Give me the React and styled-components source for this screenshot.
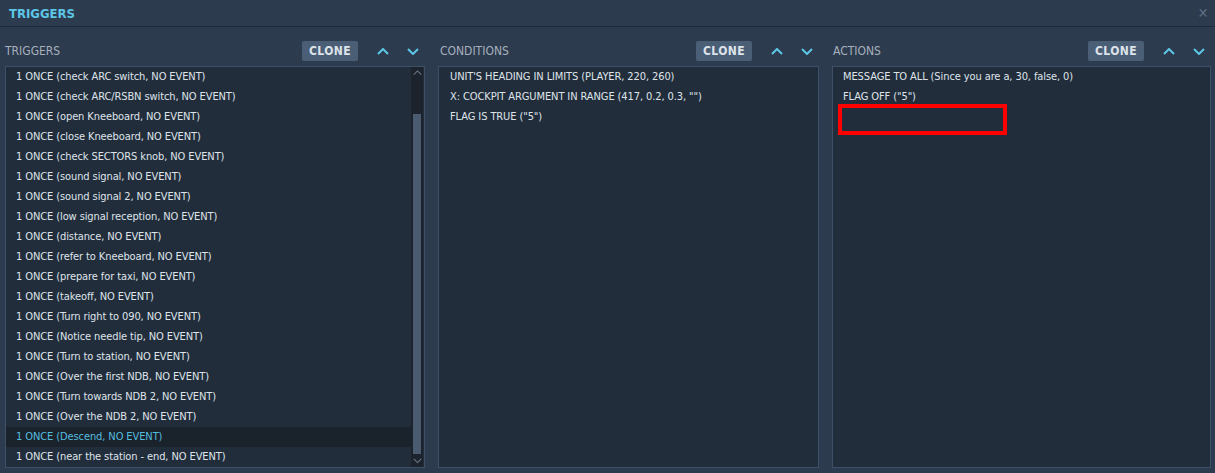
import React from 'react';
import styled, { createGlobalStyle } from 'styled-components';

const GlobalStyle = createGlobalStyle`
  html, body {
    margin: 0;
    padding: 0;
    background: #2d3b4e;
  }
  body {
    font-family: "DejaVu Sans Condensed", "DejaVu Sans", sans-serif;
  }
`;

const Window = styled.div`
  width: 1215px;
  height: 473px;
  background: #2d3b4e;
  display: flex;
  flex-direction: column;
  overflow: hidden;
`;

const TitleBar = styled.div`
  height: 26px;
  border-bottom: 1px solid #1f2937;
  display: flex;
  align-items: center;
  justify-content: space-between;
  padding: 0 6px 0 9px;
`;

const Title = styled.div`
  color: #5cc6e6;
  font-weight: bold;
  font-size: 13px;
`;

const Close = styled.div`
  color: #5d6e84;
  font-size: 14px;
  line-height: 1;
  width: 12px;
  display: flex;
  justify-content: center;
`;

const Columns = styled.div`
  flex: 1;
  display: grid;
  grid-template-columns: 420px 381px 379px;
  column-gap: 13px;
  padding: 14px 4px 5px 5px;
`;

const Column = styled.div`
  display: flex;
  flex-direction: column;
  min-height: 0;
`;

const Header = styled.div`
  height: 20px;
  display: flex;
  align-items: center;
  margin-bottom: 5px;
  padding-left: ${p => p.$indent || 0}px;
`;

const Label = styled.div`
  flex: 1;
  color: #a6b0bd;
  font-size: 12px;
`;

const CloneButton = styled.div`
  width: 56px;
  height: 20px;
  background: #4a5e76;
  border-radius: 2px;
  color: #dde3e9;
  font-weight: bold;
  font-size: 12px;
  letter-spacing: 0.4px;
  display: flex;
  align-items: center;
  justify-content: center;
  margin-right: 13px;
`;

const ArrowButton = styled.div`
  width: 24px;
  height: 20px;
  display: flex;
  align-items: center;
  justify-content: center;
  & + & {
    margin-left: 6px;
  }
`;

const List = styled.div`
  flex: 1;
  position: relative;
  background: #222d3b;
  border: 1px solid #3e5068;
  display: flex;
  min-height: 0;
`;

const Rows = styled.div`
  flex: 1;
  display: flex;
  flex-direction: column;
`;

const Row = styled.div`
  height: 20px;
  line-height: 20px;
  padding-left: ${p => p.$pad || 10}px;
  font-size: 11px;
  letter-spacing: -0.1px;
  white-space: nowrap;
  color: ${p => (p.$selected ? '#55bedf' : '#dfe4ea')};
  background: ${p => (p.$selected ? '#1a222c' : 'transparent')};
`;

const ScrollBar = styled.div`
  width: 12px;
  margin-right: 1px;
  background: #1c232d;
  display: flex;
  flex-direction: column;
  align-items: center;
`;

const ScrollArrow = styled.div`
  height: 12px;
  display: flex;
  align-items: center;
  justify-content: center;
`;

const ScrollTrack = styled.div`
  flex: 1;
  width: 100%;
  display: flex;
  justify-content: center;
  padding-top: ${p => p.$top}px;
  padding-bottom: ${p => p.$bottom}px;
`;

const Thumb = styled.div`
  width: 8px;
  background: #4a5b6f;
`;

const Highlight = styled.div`
  position: absolute;
  left: 5px;
  top: 37px;
  width: 161px;
  height: 23px;
  border: 4px solid #ff0000;
`;

const Chevron = ({ up, color = '#5cc6e6', size = 12, stroke = 2 }) => (
  <svg width={size} height={size / 2 + 1} viewBox="0 0 12 7">
    <path
      d={up ? 'M1 6 L6 1 L11 6' : 'M1 1 L6 6 L11 1'}
      fill="none"
      stroke={color}
      strokeWidth={stroke}
    />
  </svg>
);

const triggers = [
  '1 ONCE (check ARC switch, NO EVENT)',
  '1 ONCE (check ARC/RSBN switch, NO EVENT)',
  '1 ONCE (open Kneeboard, NO EVENT)',
  '1 ONCE (close Kneeboard, NO EVENT)',
  '1 ONCE (check SECTORS knob, NO EVENT)',
  '1 ONCE (sound signal, NO EVENT)',
  '1 ONCE (sound signal 2, NO EVENT)',
  '1 ONCE (low signal reception, NO EVENT)',
  '1 ONCE (distance, NO EVENT)',
  '1 ONCE (refer to Kneeboard, NO EVENT)',
  '1 ONCE (prepare for taxi, NO EVENT)',
  '1 ONCE (takeoff, NO EVENT)',
  '1 ONCE (Turn right to 090, NO EVENT)',
  '1 ONCE (Notice needle tip, NO EVENT)',
  '1 ONCE (Turn to station, NO EVENT)',
  '1 ONCE (Over the first NDB, NO EVENT)',
  '1 ONCE (Turn towards NDB 2, NO EVENT)',
  '1 ONCE (Over the NDB 2, NO EVENT)',
  '1 ONCE (Descend, NO EVENT)',
  '1 ONCE (near the station - end, NO EVENT)',
];

const conditions = [
  "UNIT'S HEADING IN LIMITS (PLAYER, 220, 260)",
  'X: COCKPIT ARGUMENT IN RANGE (417, 0.2, 0.3, "")',
  'FLAG IS TRUE ("5")',
];

const actions = [
  'MESSAGE TO ALL (Since you are a, 30, false, 0)',
  'FLAG OFF ("5")',
];

const PanelHeader = ({ label, indent }) => (
  <Header $indent={indent}>
    <Label>{label}</Label>
    <CloneButton>CLONE</CloneButton>
    <ArrowButton>
      <Chevron up />
    </ArrowButton>
    <ArrowButton>
      <Chevron />
    </ArrowButton>
  </Header>
);

export default function App() {
  return (
    <Window>
      <GlobalStyle />
      <TitleBar>
        <Title>TRIGGERS</Title>
        <Close>✕</Close>
      </TitleBar>
      <Columns>
        <Column>
          <PanelHeader label="TRIGGERS" />
          <List>
            <Rows>
              {triggers.map((t, i) => (
                <Row key={i} $selected={i === 18}>
                  {t}
                </Row>
              ))}
            </Rows>
            <ScrollBar>
              <ScrollArrow>
                <Chevron up color="#6a7888" size={9} stroke={1.4} />
              </ScrollArrow>
              <ScrollTrack $top={35} $bottom={1}>
                <Thumb />
              </ScrollTrack>
              <ScrollArrow>
                <Chevron color="#6a7888" size={9} stroke={1.4} />
              </ScrollArrow>
            </ScrollBar>
          </List>
        </Column>
        <Column>
          <PanelHeader label="CONDITIONS" indent={2} />
          <List>
            <Rows>
              {conditions.map((t, i) => (
                <Row key={i} $pad={11}>
                  {t}
                </Row>
              ))}
            </Rows>
          </List>
        </Column>
        <Column>
          <PanelHeader label="ACTIONS" indent={1} />
          <List>
            <Rows>
              {actions.map((t, i) => (
                <Row key={i}>{t}</Row>
              ))}
            </Rows>
            <Highlight />
          </List>
        </Column>
      </Columns>
    </Window>
  );
}
